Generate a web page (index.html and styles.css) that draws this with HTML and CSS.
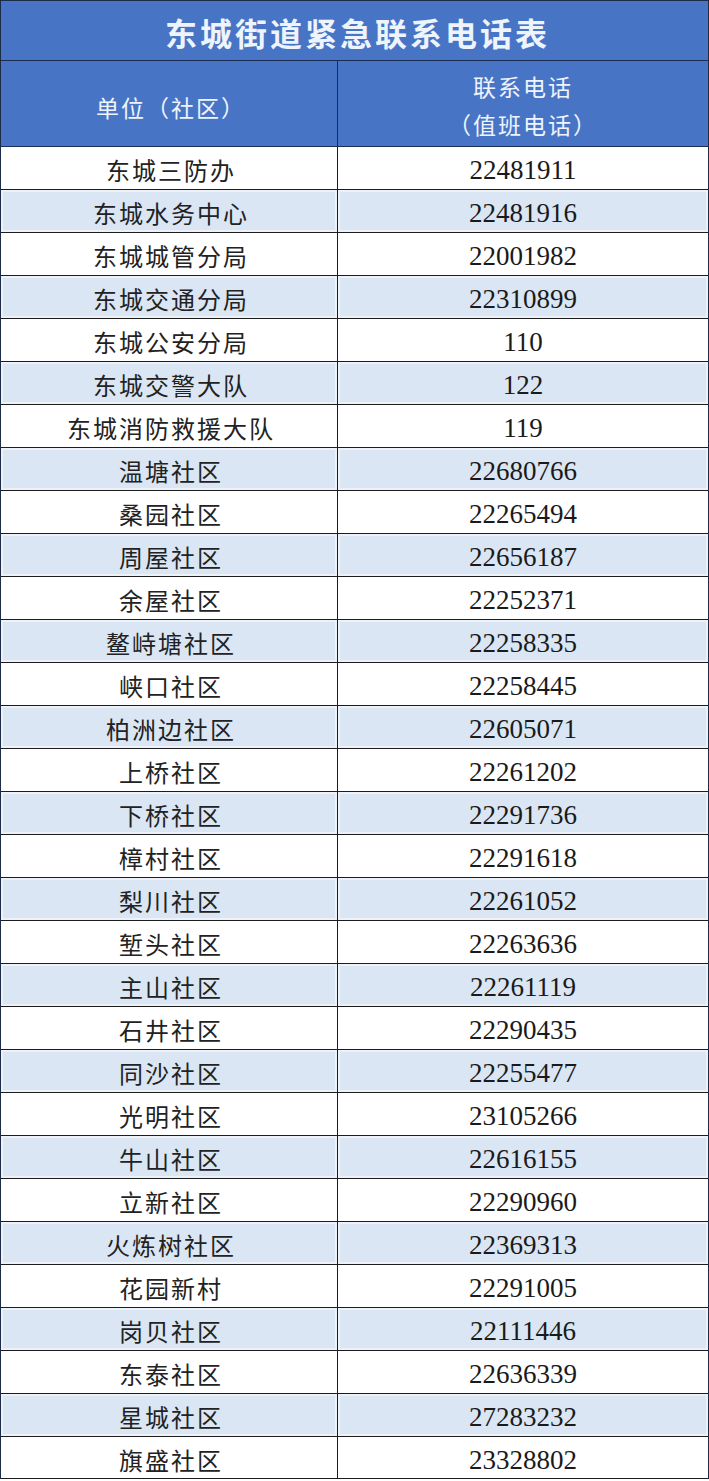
FILE: index.html
```html
<!DOCTYPE html>
<html lang="zh-CN">
<head>
<meta charset="utf-8">
<title>东城街道紧急联系电话表</title>
<link rel="stylesheet" href="styles.css">
</head>
<body>
<div class="sheet">
  <div class="title">东城街道紧急联系电话表</div>
  <div class="row head">
    <div class="cell name">单位（社区）</div>
    <div class="cell tel"><span>联系电话</span><span>（值班电话）</span></div>
  </div>
  <div class="row"><div class="cell name">东城三防办</div><div class="cell tel">22481911</div></div>
  <div class="row alt"><div class="cell name">东城水务中心</div><div class="cell tel">22481916</div></div>
  <div class="row"><div class="cell name">东城城管分局</div><div class="cell tel">22001982</div></div>
  <div class="row alt"><div class="cell name">东城交通分局</div><div class="cell tel">22310899</div></div>
  <div class="row"><div class="cell name">东城公安分局</div><div class="cell tel">110</div></div>
  <div class="row alt"><div class="cell name">东城交警大队</div><div class="cell tel">122</div></div>
  <div class="row"><div class="cell name">东城消防救援大队</div><div class="cell tel">119</div></div>
  <div class="row alt"><div class="cell name">温塘社区</div><div class="cell tel">22680766</div></div>
  <div class="row"><div class="cell name">桑园社区</div><div class="cell tel">22265494</div></div>
  <div class="row alt"><div class="cell name">周屋社区</div><div class="cell tel">22656187</div></div>
  <div class="row"><div class="cell name">余屋社区</div><div class="cell tel">22252371</div></div>
  <div class="row alt"><div class="cell name">鳌峙塘社区</div><div class="cell tel">22258335</div></div>
  <div class="row"><div class="cell name">峡口社区</div><div class="cell tel">22258445</div></div>
  <div class="row alt"><div class="cell name">柏洲边社区</div><div class="cell tel">22605071</div></div>
  <div class="row"><div class="cell name">上桥社区</div><div class="cell tel">22261202</div></div>
  <div class="row alt"><div class="cell name">下桥社区</div><div class="cell tel">22291736</div></div>
  <div class="row"><div class="cell name">樟村社区</div><div class="cell tel">22291618</div></div>
  <div class="row alt"><div class="cell name">梨川社区</div><div class="cell tel">22261052</div></div>
  <div class="row"><div class="cell name">堑头社区</div><div class="cell tel">22263636</div></div>
  <div class="row alt"><div class="cell name">主山社区</div><div class="cell tel">22261119</div></div>
  <div class="row"><div class="cell name">石井社区</div><div class="cell tel">22290435</div></div>
  <div class="row alt"><div class="cell name">同沙社区</div><div class="cell tel">22255477</div></div>
  <div class="row"><div class="cell name">光明社区</div><div class="cell tel">23105266</div></div>
  <div class="row alt"><div class="cell name">牛山社区</div><div class="cell tel">22616155</div></div>
  <div class="row"><div class="cell name">立新社区</div><div class="cell tel">22290960</div></div>
  <div class="row alt"><div class="cell name">火炼树社区</div><div class="cell tel">22369313</div></div>
  <div class="row"><div class="cell name">花园新村</div><div class="cell tel">22291005</div></div>
  <div class="row alt"><div class="cell name">岗贝社区</div><div class="cell tel">22111446</div></div>
  <div class="row"><div class="cell name">东泰社区</div><div class="cell tel">22636339</div></div>
  <div class="row alt"><div class="cell name">星城社区</div><div class="cell tel">27283232</div></div>
  <div class="row last"><div class="cell name">旗盛社区</div><div class="cell tel">23328802</div></div>
</div>
</body>
</html>
```

FILE: styles.css
```css
html, body {
  margin: 0;
  padding: 0;
  background: #ffffff;
}

.sheet {
  width: 709px;
  box-sizing: border-box;
  border: 1px solid #1d2c48;
  border-bottom: none;
  font-family: "Noto Sans CJK SC", "Noto Sans", sans-serif;
  color: #1e1e1e;
}

.title {
  height: 60px;
  background: #4874c6;
  border-bottom: 1px solid #1b2d55;
  color: #eef4fb;
  font-size: 32px;
  font-weight: 700;
  letter-spacing: 3px;
  display: flex;
  align-items: center;
  justify-content: center;
  padding-top: 2px;
  padding-left: 6px;
  box-sizing: border-box;
}

.row {
  display: grid;
  grid-template-columns: 337px 1fr;
  height: 43px;
  box-sizing: border-box;
  border-bottom: 1px solid #1c1c1c;
}

.row.last {
  height: 42px;
  border-bottom: 1px solid #1c1c1c;
}

.cell {
  display: flex;
  align-items: center;
  justify-content: center;
  padding-top: 3px;
  box-sizing: border-box;
}

.cell.name {
  border-right: 1px solid #1c1c1c;
  font-size: 24px;
  letter-spacing: 2px;
  color: #222222;
  padding-left: 4px;
}

.cell.tel {
  font-family: "Liberation Serif", "Times New Roman", serif;
  font-size: 27px;
  letter-spacing: 0;
  color: #1a1a1a;
  padding-top: 5px;
}

.row.alt .cell {
  background: #dae6f3;
  box-shadow: inset 0 0 0 2px #edf2f8;
}

.row.head {
  height: 86px;
  background: #4874c6;
  border-bottom: 1px solid #1b2d55;
}

.row.head .cell {
  color: #eef4fb;
  font-family: "Noto Sans CJK SC", "Noto Sans", sans-serif;
  font-size: 23px;
  letter-spacing: 2px;
  padding-top: 2px;
}

.row.head .cell.name {
  border-right: 1px solid #1b2d55;
  padding-top: 6px;
}

.row.head .cell.tel {
  flex-direction: column;
  line-height: 38px;
}
```
